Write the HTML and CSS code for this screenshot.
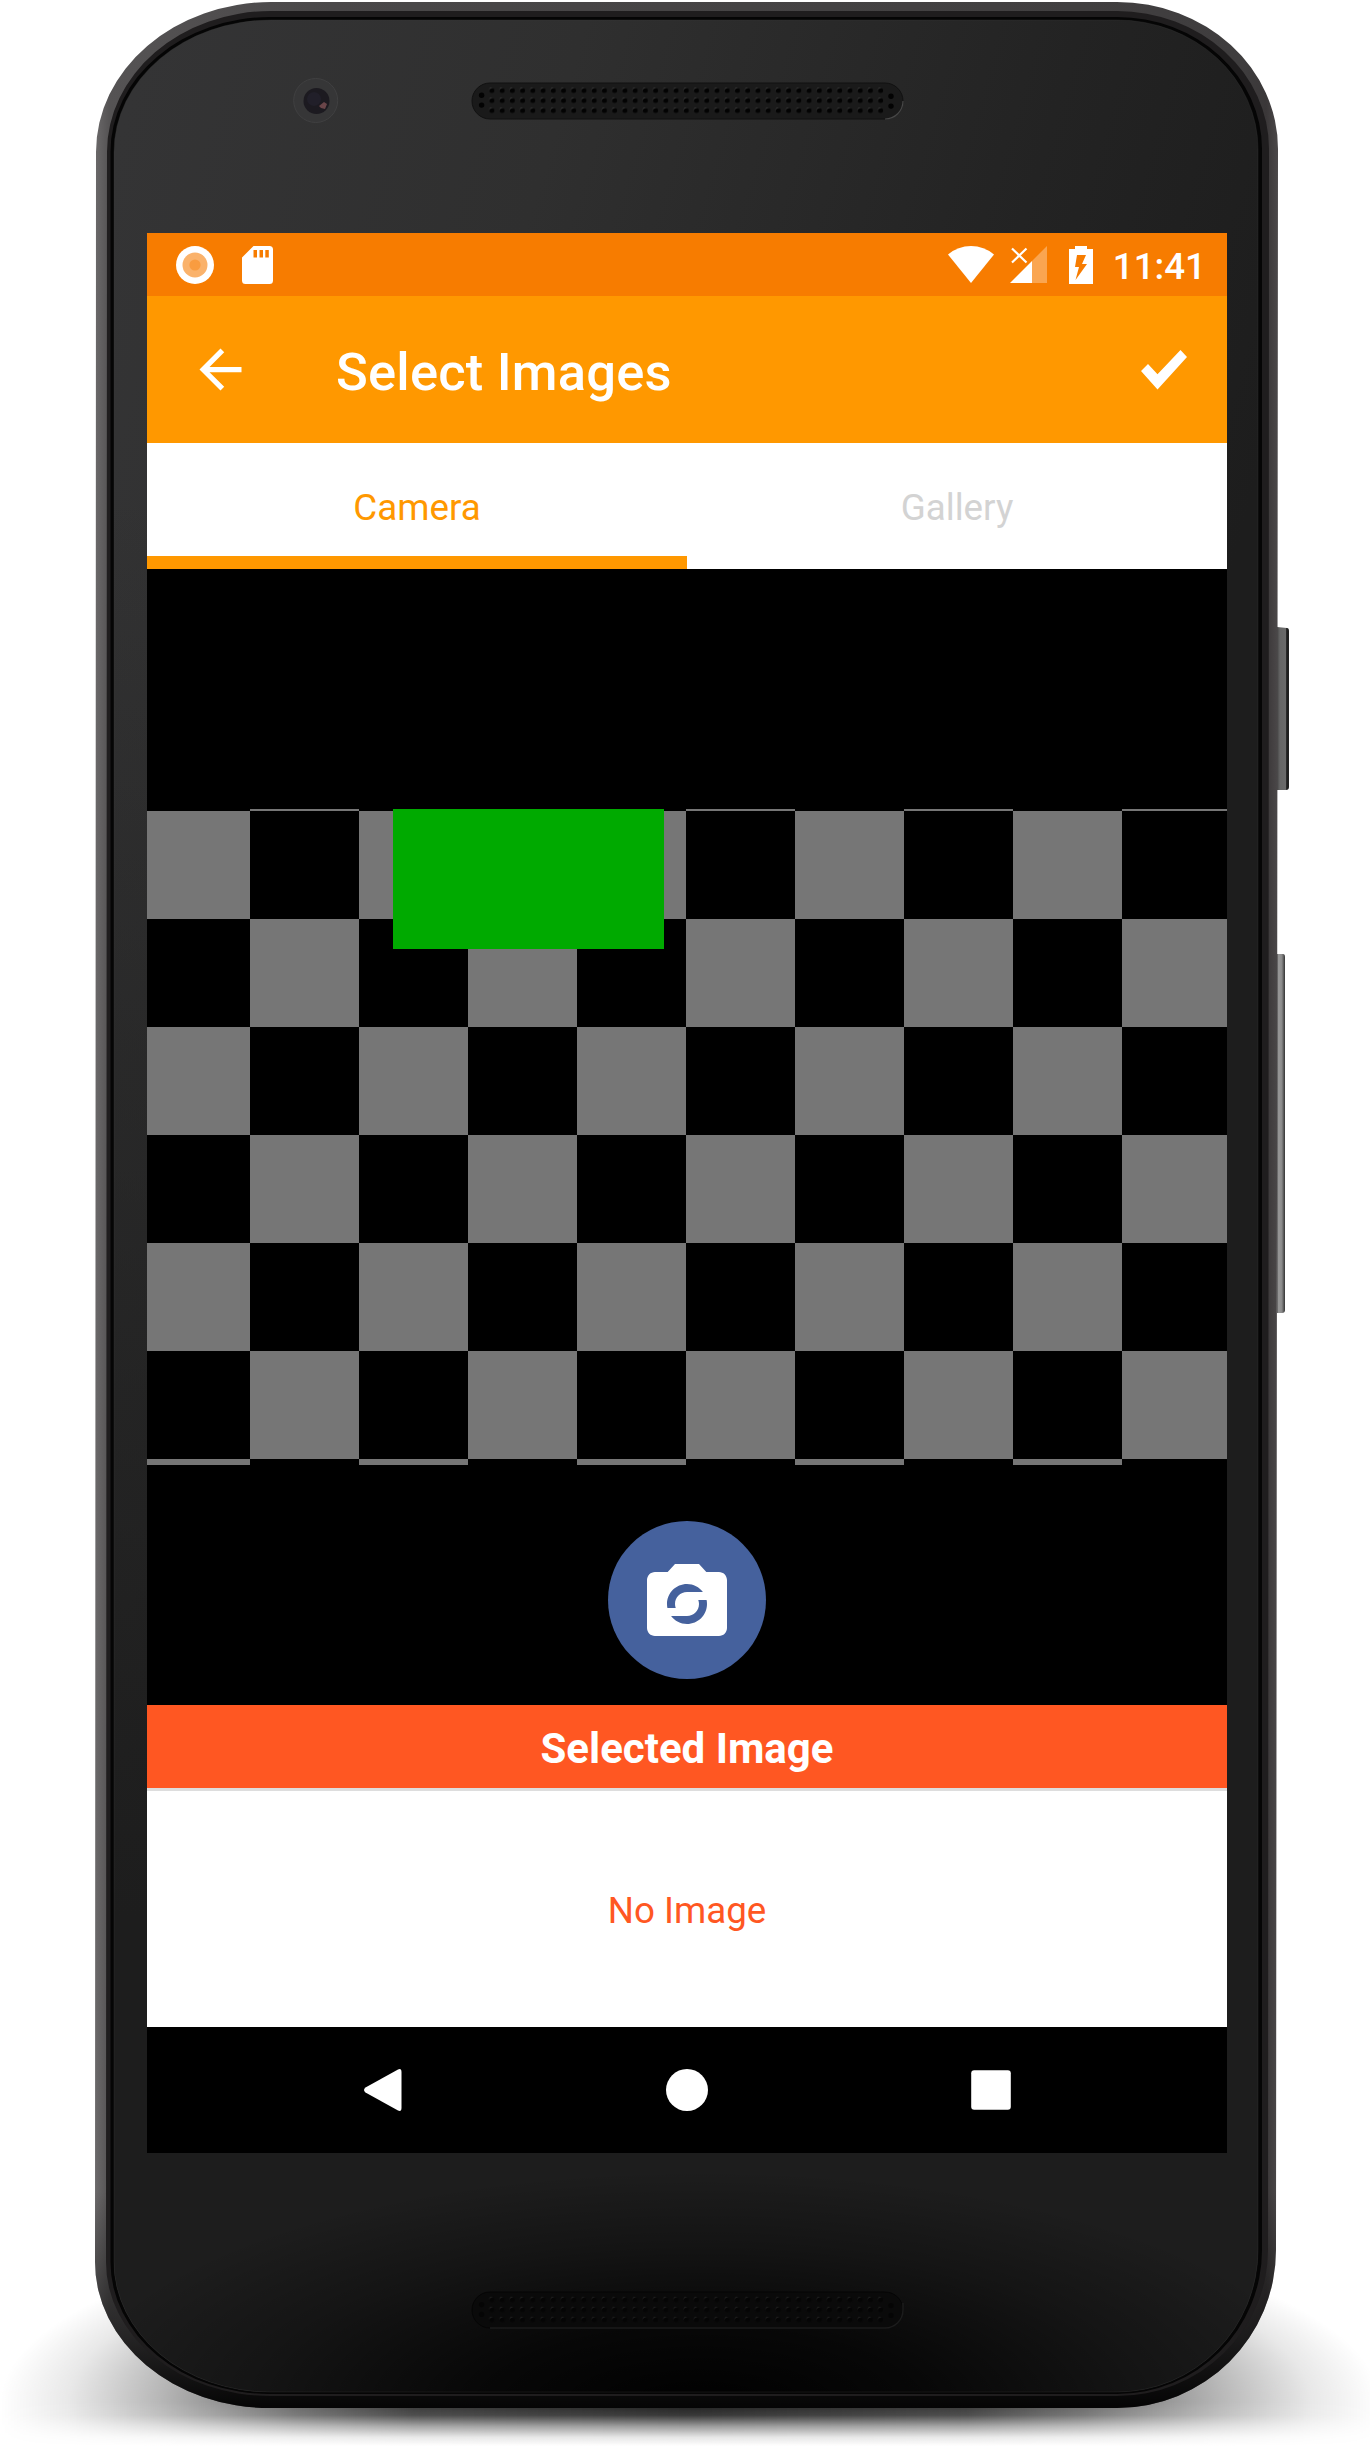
FILE: index.html
```html
<!DOCTYPE html>
<html lang="en">
<head>
<meta charset="utf-8">
<title>Select Images</title>
<link rel="stylesheet" href="styles.css">
</head>
<body>
<div class="device">
  <svg class="shell" viewBox="0 0 1370 2446" aria-hidden="true">
    <defs>
      <linearGradient id="metal" x1="0" x2="1" y1="0" y2="0">
        <stop offset="0" stop-color="#6b696a"/><stop offset=".012" stop-color="#555354"/>
        <stop offset=".2" stop-color="#4a4849"/><stop offset=".97" stop-color="#3f3d3e"/>
        <stop offset=".99" stop-color="#3a3738"/><stop offset="1" stop-color="#4b4849"/>
      </linearGradient>
      <linearGradient id="dim" x1="0" x2="0" y1="0" y2="1">
        <stop offset=".91" stop-color="#000" stop-opacity="0"/><stop offset=".97" stop-color="#000" stop-opacity=".55"/>
        <stop offset="1" stop-color="#000" stop-opacity=".93"/>
      </linearGradient>
      <linearGradient id="glass" gradientUnits="userSpaceOnUse" x1="114" y1="150" x2="1258" y2="480">
        <stop offset="0" stop-color="#343435"/><stop offset=".35" stop-color="#2f2f2f"/>
        <stop offset=".75" stop-color="#232323"/><stop offset="1" stop-color="#1d1d1d"/>
      </linearGradient>
      <linearGradient id="glassFade" x1="0" x2="0" y1="0" y2="1">
        <stop offset=".2" stop-color="#1d1d1d" stop-opacity="0"/><stop offset=".8" stop-color="#1d1d1d"/>
      </linearGradient>
      <radialGradient id="floor" gradientUnits="userSpaceOnUse" cx="0" cy="0" r="1" gradientTransform="translate(700 2410) scale(640 240)">
        <stop offset="0" stop-color="#000"/><stop offset=".35" stop-color="#000" stop-opacity=".75"/>
        <stop offset=".7" stop-color="#000" stop-opacity=".3"/><stop offset="1" stop-color="#000" stop-opacity="0"/>
      </radialGradient>
      <radialGradient id="shadow">
        <stop offset="0" stop-color="#000" stop-opacity=".9"/><stop offset=".4" stop-color="#000" stop-opacity=".8"/>
        <stop offset=".57" stop-color="#000" stop-opacity=".6"/><stop offset=".77" stop-color="#000" stop-opacity=".28"/>
        <stop offset=".9" stop-color="#000" stop-opacity=".09"/><stop offset="1" stop-color="#000" stop-opacity="0"/>
      </radialGradient>
      <linearGradient id="shadowAcross" x1="0" x2="1" y1="0" y2="0">
        <stop offset="0" stop-opacity="0"/><stop offset=".05" stop-opacity=".09"/><stop offset=".115" stop-opacity=".28"/>
        <stop offset=".215" stop-opacity=".6"/><stop offset=".3" stop-opacity=".8"/><stop offset=".5" stop-opacity=".9"/>
        <stop offset=".7" stop-opacity=".8"/><stop offset=".785" stop-opacity=".6"/><stop offset=".885" stop-opacity=".28"/>
        <stop offset=".95" stop-opacity=".09"/><stop offset="1" stop-opacity="0"/>
      </linearGradient>
      <linearGradient id="fadeDown" x1="0" x2="0" y1="0" y2="1">
        <stop offset="0" stop-color="#fff"/><stop offset=".3" stop-color="#ddd"/><stop offset=".55" stop-color="#707070"/>
        <stop offset=".8" stop-color="#1c1c1c"/><stop offset="1" stop-color="#000"/>
      </linearGradient>
      <mask id="belowMask"><rect y="2402" width="1370" height="44" fill="url(#fadeDown)"/></mask>
      <linearGradient id="key" x1="0" x2="1" y1="0" y2="0">
        <stop offset="0" stop-color="#444"/><stop offset=".25" stop-color="#666"/><stop offset=".75" stop-color="#6a6a6a"/>
        <stop offset=".8" stop-color="#1c1c1c"/><stop offset="1" stop-color="#222"/>
      </linearGradient>
      <linearGradient id="volume" x1="0" x2="1" y1="0" y2="0">
        <stop offset="0" stop-color="#555"/><stop offset=".2" stop-color="#999"/><stop offset=".6" stop-color="#8a8a8a"/>
        <stop offset="1" stop-color="#333"/>
      </linearGradient>
      <clipPath id="above"><rect y="2100" width="1370" height="302"/></clipPath>
      <pattern id="holes" x="-5.1" y="2.8" width="10.23" height="10" patternUnits="userSpaceOnUse">
        <circle cx="4.4" cy="4.1" r="1.9" fill="#5c5c5c"/><circle cx="5.1" cy="5" r="2.5" fill="#030303"/>
      </pattern>
      <g id="perforation">
        <rect x="-5.100" y="2.800" width="399" height="30" fill="url(#holes)" transform="translate(19.900 0)"/>
        <g fill="#030303"><circle cx="9.600" cy="12.600" r="2.700"/><circle cx="9.600" cy="22.400" r="2.700"/><circle cx="419" cy="13.600" r="2.700"/><circle cx="419" cy="23.400" r="2.700"/></g>
      </g>
    </defs>
    <ellipse cx="690" cy="2402" rx="690" ry="200" fill="url(#shadow)" clip-path="url(#above)"/>
    <rect y="2402" width="1380" height="44" fill="url(#shadowAcross)" mask="url(#belowMask)"/>
    <path d="M1277 627L1287 628Q1289 628 1289 631V787Q1289 790 1286 790H1277Z" fill="url(#key)"/>
    <path d="M1277 954H1283Q1285 954 1285 957V1310Q1285 1313 1282 1313H1277Z" fill="url(#volume)"/>
    <g>
      <path d="M96 152A175 150 0 0 1 271 2H1117A161 147 0 0 1 1278 149L1276 2250A159 158 0 0 1 1117 2408H270A175 146 0 0 1 95 2262Z" fill="url(#metal)"/>
      <path d="M96 152A175 150 0 0 1 271 2H1117A161 147 0 0 1 1278 149L1276 2250A159 158 0 0 1 1117 2408H270A175 146 0 0 1 95 2262Z" fill="url(#dim)"/>
    </g>
    <path d="M107 152A164 141 0 0 1 271 11H1117A152 138 0 0 1 1269 149L1268 2250A151 146 0 0 1 1117 2396H270A164 134 0 0 1 106 2262Z" fill="#1f1d1e"/>
    <path d="M110.500 152A160 135 0 0 1 271 17H1117A145 132 0 0 1 1262 149V2250A145 144 0 0 1 1117 2394H270A159 132 0 0 1 110.500 2262Z" fill="#050505"/>
    <g>
      <path d="M114 152A157 132 0 0 1 271 20H1117A141 129 0 0 1 1258 149V2250A141 142 0 0 1 1117 2392H270A156 130 0 0 1 114 2262Z" fill="url(#glass)"/>
      <path d="M114 152A157 132 0 0 1 271 20H1117A141 129 0 0 1 1258 149V2250A141 142 0 0 1 1117 2392H270A156 130 0 0 1 114 2262Z" fill="url(#glassFade)"/>
      <path d="M114 152A157 132 0 0 1 271 20H1117A141 129 0 0 1 1258 149V2250A141 142 0 0 1 1117 2392H270A156 130 0 0 1 114 2262Z" fill="url(#floor)" stroke="#3a3a3a" stroke-opacity=".3"/>
    </g>
    <circle cx="315.700" cy="100.500" r="22" fill="#363637" stroke="#404041"/>
    <circle cx="316.500" cy="101" r="13" fill="#1c1a20"/>
    <circle cx="314" cy="99" r="7" fill="#211f29"/>
    <path d="M319 106l5-4 3 2-2 5-4-1z" fill="#6a4549"/>
    <rect x="472" y="83" width="431" height="36" rx="18" fill="#1a1a1a" stroke="#111"/>
    <path d="M885 119A18 18 0 0 0 903 101" fill="none" stroke="#484848" stroke-width="1.200"/>
    <use href="#perforation" x="472" y="82.700"/>
    <rect x="472" y="2292" width="431" height="36" rx="18" fill="#0a0a0a" stroke="#050505"/>
    <path d="M490 2328H885A18 18 0 0 0 903 2310V2303" fill="none" stroke="#1c1c1c" stroke-width="1.500"/>
    <use href="#perforation" x="472" y="2292" opacity=".6"/>
  </svg>

  <main class="screen">
    <div class="status">
      <svg class="rec" viewBox="0 0 38 38"><circle cx="19" cy="19" r="19" fill="#fff"/><circle cx="19" cy="19" r="12.500" fill="#fab26b"/><circle cx="19" cy="19" r="5.600" fill="#f99c40"/></svg>
      <svg class="sd" viewBox="0 0 31 38"><path fill="#fff" fill-rule="evenodd" d="M11.500 0H27.500Q31 0 31 3.500V34.500Q31 38 27.500 38H3.500Q0 38 0 34.500V11.500ZM11.500 4V11.500H15V4ZM17.500 4V11.500H21V4ZM23.300 4V11.500H26.800V4Z"/></svg>
      <div class="system">
        <svg class="wifi" viewBox="0 0 46 37"><path fill="#fff" d="M0 8.500Q10 0 23 0T46 8.500L23 37Z"/></svg>
        <svg class="signal" viewBox="0 0 37 37"><path fill="#faa550" d="M37 0V37H22V15Z"/><path fill="#fff" d="M22 15V37H0Z"/><path d="M2 2.500L16.500 16.500M16.500 2.500L2 16.500" stroke="#fff" stroke-width="2.200"/></svg>
        <svg class="battery" viewBox="0 0 24 38"><path fill="#fff" fill-rule="evenodd" d="M6 0H18V3H24V38H0V3H6ZM8 9L6 21H10L6.500 34L18 18H13L17 9Z"/></svg>
        <span class="clock">11:41</span>
      </div>
    </div>

    <header class="appbar">
      <svg class="back" viewBox="0 0 24 24"><path fill="#fff" d="M20 11H7.830l5.590-5.590L12 4l-8 8 8 8 1.410-1.410L7.830 13H20v-2z"/></svg>
      <h1 class="title">Select Images</h1>
      <svg class="done" viewBox="0 0 46 40"><path fill="#fff" d="M0 21L7 14L16.500 24.300L39.500 0L46 7L16.500 39.500Z"/></svg>
    </header>

    <nav class="tabs">
      <div class="tab tab-active">Camera</div>
      <div class="tab">Gallery</div>
    </nav>

    <section class="camera">
      <div class="preview"><div class="marker"></div></div>
      <div class="shutter">
        <svg class="shutter-icon" viewBox="0 0 24 24"><path fill="#fff" d="M20 4h-3.170L15 2H9L7.170 4H4c-1.100 0-2 .9-2 2v12c0 1.100.9 2 2 2h16c1.100 0 2-.9 2-2V6c0-1.100-.9-2-2-2zm-8 3c1.630 0 3.060.79 3.980 2H12c-1.660 0-3 1.340-3 3 0 .35.07.69.18 1H7.100c-.06-.32-.1-.66-.1-1 0-2.760 2.240-5 5-5zm0 10c-1.630 0-3.060-.79-3.980-2H12c1.660 0 3-1.340 3-3 0-.35-.07-.69-.18-1h2.080c.07.32.1.66.1 1 0 2.760-2.240 5-5 5z"/></svg>
      </div>
    </section>

    <h2 class="selected">Selected Image</h2>
    <div class="empty">No Image</div>

    <div class="navbar">
      <svg class="key" viewBox="0 0 42 42"><path fill="#fff" d="M36 .5Q39.500 -1 39.500 3V39Q39.500 43 36 41.500L3.500 23.500Q.5 21 3.500 18.500Z"/></svg>
      <svg class="key" viewBox="0 0 42 42"><circle cx="21" cy="21" r="21" fill="#fff"/></svg>
      <svg class="key" viewBox="0 0 42 42"><rect x="1.200" y="1.200" width="39.600" height="39.600" rx="3" fill="#fff"/></svg>
    </div>
  </main>
</div>
</body>
</html>
```

FILE: styles.css
```css
* { box-sizing: border-box; }

body {
  margin: 0;
  background: #fff;
  font-family: Roboto, "Liberation Sans", sans-serif;
}

h1, h2 { margin: 0; }
svg { display: block; flex: none; }

.device {
  position: relative;
  width: 1370px;
  height: 2446px;
  padding: 233px 143px 293px 147px;
  overflow: hidden;
}

/* The handset is artwork that sits behind the screen */
.shell {
  position: absolute;
  inset: 0;
  width: 1370px;
  height: 2446px;
}

.screen {
  position: relative;
  display: flex;
  flex-direction: column;
  width: 1080px;
  height: 1920px;
  background: #fff;
}

.status {
  display: flex;
  align-items: center;
  height: 63px;
  padding: 0 21px 0 28.5px;
  background: #f77c00;
}
.rec { width: 38px; height: 38px; margin-right: 28.5px; }
.sd { width: 31px; height: 38px; }
.system { display: flex; align-items: center; margin-left: auto; color: #fff; }
.wifi { width: 46px; height: 37px; margin-right: 16px; }
.signal { width: 37px; height: 37px; margin-right: 22px; }
.battery { width: 24px; height: 38px; margin-right: 20px; }
.clock { padding-top: 4px; font-size: 36.75px; font-weight: 500; line-height: 40px; }

.appbar {
  display: flex;
  align-items: center;
  height: 147px;
  padding: 0 40px 0 42px;
  background: #ff9800;
  color: #fff;
}
.back { width: 63px; height: 63px; }
.title { padding-top: 5px; margin-left: 84px; font-size: 52.5px; font-weight: 500; line-height: 60px; letter-spacing: .2px; }
.done { width: 46px; height: 40px; margin-left: auto; }

.tabs { display: flex; height: 126px; }
.tab {
  flex: 1;
  padding-top: 3px;
  color: #d3d3d3;
  font-size: 36.75px;
  line-height: 123px;
  text-align: center;
}
.tab-active { color: #ff9800; box-shadow: inset 0 -13px #ff9800; }

.camera {
  display: flex;
  flex-direction: column;
  align-items: center;
  height: 1136px;
  padding-top: 240px;
  background: #000;
}
.preview {
  width: 1080px;
  height: 656px;
  padding-left: 246px;
  background: conic-gradient(#000 25%, #767676 0 50%, #000 0 75%, #767676 0) -6px 2px / 218px 216px;
}
.marker { width: 271px; height: 140px; background: #00aa00; }
.shutter {
  display: flex;
  justify-content: center;
  width: 158px;
  height: 158px;
  margin-top: 56px;
  padding-top: 35px;
  border-radius: 50%;
  background: #45619d;
}
.shutter-icon { width: 96px; height: 96px; }

.selected {
  height: 86px;
  padding-top: 4px;
  border-bottom: 3px solid #ddd;
  background: #ff5722;
  color: #fff;
  font-size: 42px;
  font-weight: 700;
  line-height: 79px;
  text-align: center;
}
.empty {
  height: 236px;
  padding-top: 3px;
  color: #ff5722;
  font-size: 36.75px;
  line-height: 233px;
  text-align: center;
}

.navbar {
  display: flex;
  align-items: center;
  justify-content: center;
  gap: 262px;
  height: 126px;
  background: #000;
}
.key { width: 42px; height: 42px; }
```
